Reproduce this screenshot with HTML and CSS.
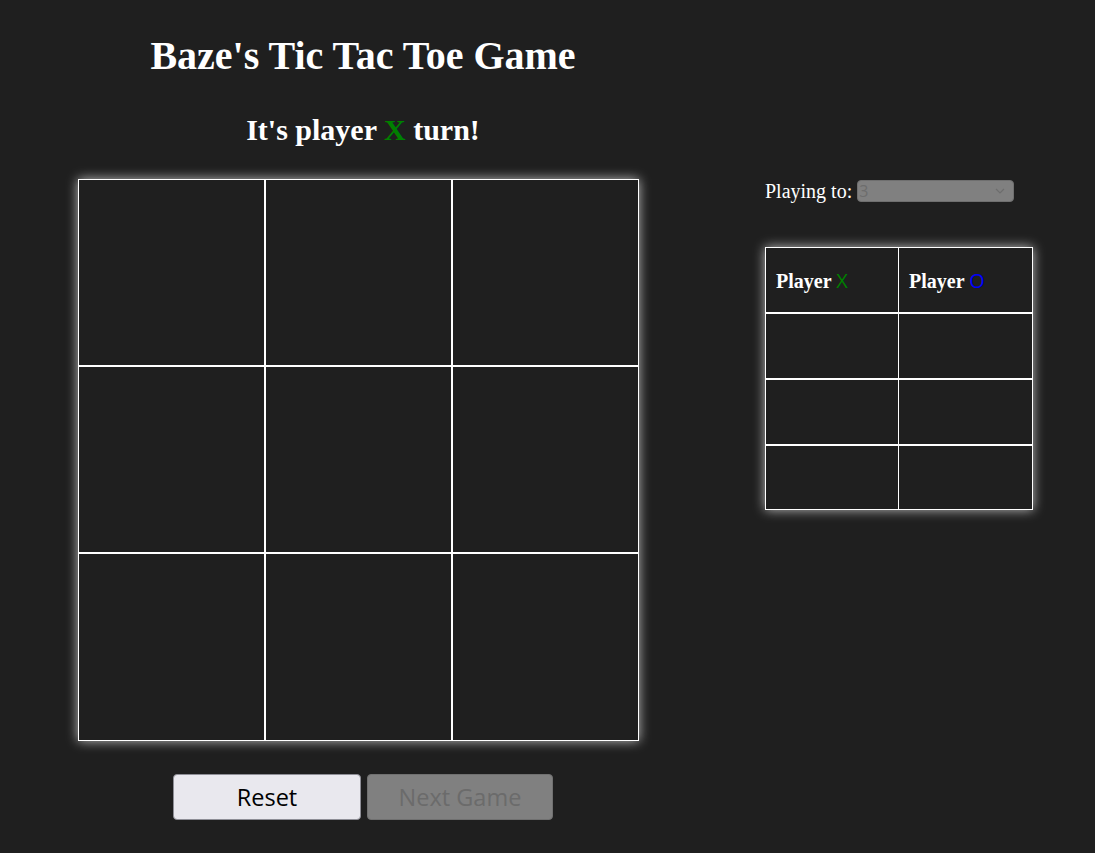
FILE: index.html
```html
<!DOCTYPE html>
<html>
<head>
<meta charset="utf-8">
<link rel="stylesheet" href="styles.css">
</head>
<body>
<div class="page">
  <div class="game">
    <h1 class="title">Baze's Tic Tac Toe Game</h1>
    <h2 class="status">It's player <span class="x">X</span> turn!</h2>
    <div class="board">
      <div class="cell"></div><div class="cell"></div><div class="cell"></div>
      <div class="cell"></div><div class="cell"></div><div class="cell"></div>
      <div class="cell"></div><div class="cell"></div><div class="cell"></div>
    </div>
    <div class="buttons">
      <button class="btn">Reset</button>
      <button class="btn" disabled>Next Game</button>
    </div>
  </div>
  <div class="side">
    <div class="playing">
      <span>Playing to:</span>
      <div class="select"><span>3</span><svg width="10" height="6" viewBox="0 0 10 6"><path d="M1 1l4 4 4-4" fill="none" stroke="#6d6d6d" stroke-width="1.2"/></svg></div>
    </div>
    <table class="score">
      <tr><th>Player <span class="px">X</span></th><th>Player <span class="po">O</span></th></tr>
      <tr><td></td><td></td></tr>
      <tr><td></td><td></td></tr>
      <tr class="last"><td></td><td></td></tr>
    </table>
  </div>
</div>
</body>
</html>
```

FILE: styles.css
```css
html, body {
  margin: 0;
  padding: 0;
  background: #1f1f1f;
  color: #fff;
  font-family: "Liberation Serif", "Times New Roman", serif;
}
.page {
  display: flex;
  align-items: flex-start;
}
.game {
  width: 726px;
  display: flex;
  flex-direction: column;
  align-items: center;
}
.title {
  font-size: 40px;
  font-weight: bold;
  margin: 33px 0 0 0;
  line-height: 46px;
}
.status {
  font-size: 30px;
  font-weight: bold;
  margin: 34px 0 0 0;
  line-height: 34px;
}
.x { color: #008000; }
.board {
  margin: 32px 0 0 -10px;
  display: grid;
  grid-template-columns: repeat(3, 187px);
  grid-template-rows: 187px 187px 188px;
  box-shadow: 0 0 11px rgba(255,255,255,0.7);
}
.cell {
  border: 1px solid #fff;
}
.buttons {
  margin-top: 33px;
  display: flex;
  gap: 6px;
}
.btn {
  width: 188px;
  height: 46px;
  font-family: "Open Sans", "Noto Sans", sans-serif;
  font-size: 23.5px;
  background: #e9e8ee;
  color: #000;
  border: 1px solid #8e8e96;
  border-radius: 4px;
  padding: 0;
}
.btn:disabled {
  width: 186px;
  background: #808080;
  color: #6b6b6b;
  border-color: #707070;
}
.side {
  margin-left: 39px;
  padding-top: 180px;
}
.playing {
  display: flex;
  align-items: center;
  gap: 5px;
  font-size: 20px;
  height: 22px;
}
.select {
  width: 157px;
  height: 22px;
  box-sizing: border-box;
  background: #808080;
  border: 1px solid #6f6f6f;
  border-radius: 4px;
  display: flex;
  align-items: center;
  justify-content: space-between;
  padding: 0 8px 0 1px;
  font-family: "Open Sans", "Noto Sans", sans-serif;
  font-size: 16px;
  color: #6d6d6d;
}
.score {
  margin-top: 45px;
  border-collapse: collapse;
  box-shadow: 0 0 11px rgba(255,255,255,0.7);
}
.score th, .score td {
  border: 1px solid #fff;
  width: 113px;
  height: 64px;
  padding: 0 10px;
  text-align: left;
}
.score th:first-child, .score td:first-child {
  width: 112px;
}
.score tr + tr td {
  border-top: 2px solid #fff;
}
.score .last td {
  height: 63px;
}
.score th {
  font-size: 20px;
  font-weight: bold;
}
.px, .po {
  font-family: "Open Sans", "Noto Sans", sans-serif;
  font-weight: 500;
  font-size: 20px;
}
.px { color: #008000; }
.po { color: #0000ff; }
```
